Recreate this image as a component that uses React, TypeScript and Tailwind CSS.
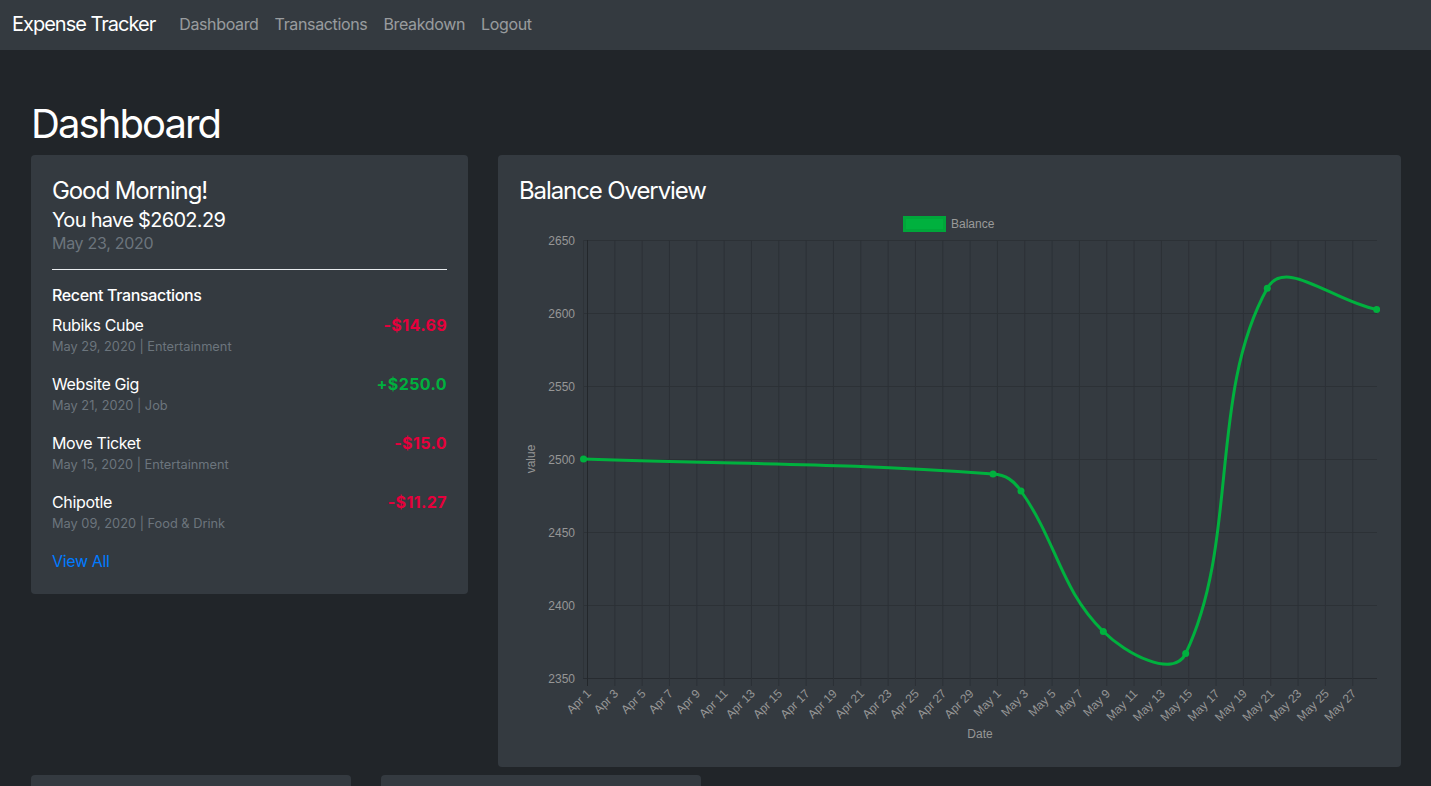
import React from 'react';

type Pt = [number, number];

// balance points, already in page pixels (chart svg uses an absolute viewBox)
const points: Pt[] = [
  [583.5, 459],
  [993, 474],
  [1021, 491],
  [1103.3, 631.5],
  [1185.7, 653.5],
  [1267.3, 288.3],
  [1376.7, 309.5],
];

const transactions = [
  { name: 'Rubiks Cube', meta: 'May 29, 2020 | Entertainment', amount: '-$14.69', income: false },
  { name: 'Website Gig', meta: 'May 21, 2020 | Job', amount: '+$250.0', income: true },
  { name: 'Move Ticket', meta: 'May 15, 2020 | Entertainment', amount: '-$15.0', income: false },
  { name: 'Chipotle', meta: 'May 09, 2020 | Food & Drink', amount: '-$11.27', income: false },
];

// same maths as chart.js splineCurve, tension 0.4
const buildPath = (pts: Pt[], t = 0.4) => {
  const ctrl = pts.map((cur, i) => {
    const prev = pts[i - 1] ?? cur;
    const next = pts[i + 1] ?? cur;
    const d01 = Math.hypot(cur[0] - prev[0], cur[1] - prev[1]);
    const d12 = Math.hypot(next[0] - cur[0], next[1] - cur[1]);
    const s01 = d01 + d12 ? d01 / (d01 + d12) : 0;
    const s12 = d01 + d12 ? d12 / (d01 + d12) : 0;
    const fa = t * s01;
    const fb = t * s12;
    return {
      before: [cur[0] - fa * (next[0] - prev[0]), cur[1] - fa * (next[1] - prev[1])],
      after: [cur[0] + fb * (next[0] - prev[0]), cur[1] + fb * (next[1] - prev[1])],
    };
  });
  let d = `M${pts[0][0]},${pts[0][1]}`;
  for (let i = 0; i < pts.length - 1; i++) {
    const a = ctrl[i].after;
    const b = ctrl[i + 1].before;
    const p = pts[i + 1];
    d += ` C${a[0].toFixed(1)},${a[1].toFixed(1)} ${b[0].toFixed(1)},${b[1].toFixed(1)} ${p[0]},${p[1]}`;
  }
  return d;
};

const xLabels: { label: string; x: number }[] = [];
for (let i = 0; i < 29; i++) {
  const day = i * 2 + 1;
  const label = day <= 30 ? `Apr ${day}` : `May ${day - 30}`;
  xLabels.push({ label, x: 587.5 + i * 27.33 });
}
const yTicks = [2650, 2600, 2550, 2500, 2450, 2400, 2350];

const BalanceChart = () => (
  <svg width={861} height={541} viewBox="519 205 861 541" className="block" style={{ fontFamily: '"Liberation Sans", Arial, sans-serif' }}>
    {/* legend */}
    <rect x={904.5} y={217.5} width={40} height={13} fill="#00b13e" stroke="#00a63a" strokeWidth={3} />
    <text x={951} y={228} fontSize={12} fill="#9a9a9a">Balance</text>

    {/* horizontal grid */}
    {yTicks.map((v, i) => {
      const y = 240 + i * 73 + 0.5;
      return (
        <g key={v}>
          <line x1={583} x2={1377} y1={y} y2={y} stroke={i === yTicks.length - 1 ? '#272b30' : '#2c3136'} strokeWidth={1} />
          <text x={575} y={y + 4} fontSize={12} fill="#969696" textAnchor="end">{v}</text>
        </g>
      );
    })}

    {/* vertical grid */}
    <line x1={583.5} x2={583.5} y1={240} y2={678} stroke="#2e3338" />
    {xLabels.map((l, i) => (
      <g key={l.label}>
        <line x1={l.x} x2={l.x} y1={240} y2={686} stroke={i === 0 ? '#23272b' : '#2c3136'} strokeWidth={1} />
        <text
          x={l.x + 2}
          y={692}
          fontSize={12}
          fill="#969696"
          textAnchor="end"
          dominantBaseline="middle"
          transform={`rotate(-45 ${l.x + 2} 692)`}
        >
          {l.label}
        </text>
      </g>
    ))}

    <text x={535} y={459} fontSize={12} fill="#969696" textAnchor="middle" transform="rotate(-90 535 459)">value</text>
    <text x={980} y={738} fontSize={12} fill="#969696" textAnchor="middle">Date</text>

    <path d={buildPath(points)} fill="none" stroke="#00b13e" strokeWidth={3} strokeLinejoin="round" />
    {points.map(([x, y]) => (
      <circle key={x} cx={x} cy={y} r={3.5} fill="#00b13e" />
    ))}
  </svg>
);

export default function App() {
  return (
    <div className="min-h-screen bg-[#212529] text-white" style={{ fontFamily: 'Inter, "Noto Sans", sans-serif' }}>
      {/* Navbar */}
      <nav className="h-[50px] bg-[#343a40] flex items-center pl-[12px] pb-[3px]">
        <span className="text-[20px] leading-[30px] tracking-[-1px] text-white mr-[16px]">Expense Tracker</span>
        <div className="flex items-center text-[16px] tracking-[-0.35px] text-white/50">
          <span className="px-[8px]">Dashboard</span>
          <span className="px-[8px]">Transactions</span>
          <span className="px-[8px]">Breakdown</span>
          <span className="px-[8px]">Logout</span>
        </div>
      </nav>

      <main className="pl-[31px] pr-[30px] pt-[50px]">
        <h1 className="text-[40px] leading-[48px] tracking-[-1.9px] font-normal mb-[7px]">Dashboard</h1>

        <div className="grid grid-cols-[437px_903px] gap-[30px] items-start">
          {/* Summary card */}
          <div className="bg-[#343a40] rounded-[4px] p-[21px]">
            <h4 className="text-[24px] leading-[29px] tracking-[-1.1px]">Good Morning!</h4>
            <h5 className="text-[20px] leading-[24px] tracking-[-0.7px] mt-[3px]">You have $2602.29</h5>
            <div className="text-[16px] leading-[20px] tracking-[-0.3px] mt-[1px] text-[#6c757d]">May 23, 2020</div>
            <hr className="my-[16px] border-0 border-t border-[#e9ecef]" />
            <h6 className="text-[16px] leading-[19px] tracking-[-0.35px] font-medium mb-[8px]">Recent Transactions</h6>
            {transactions.map((t) => (
              <div key={t.name} className="flex justify-between mb-[16px]">
                <div>
                  <div className="text-[16px] leading-[24px] tracking-[-0.35px]">{t.name}</div>
                  <div className="text-[12.8px] leading-[19px] text-[#6c757d]">{t.meta}</div>
                </div>
                <div className={`text-[16px] leading-[24px] tracking-[0.4px] font-bold ${t.income ? 'text-[#00b13e]' : 'text-[#e6003c]'}`}>
                  {t.amount}
                </div>
              </div>
            ))}
            <div className="text-[16px] leading-[24px] tracking-[-0.35px] text-[#007bff]">View All</div>
          </div>

          {/* Chart card */}
          <div className="bg-[#343a40] rounded-[4px] p-[21px]">
            <h4 className="text-[24px] leading-[29px] tracking-[-1.1px]">Balance Overview</h4>
            <BalanceChart />
          </div>
        </div>

        <div className="flex gap-[30px] mt-[8px]">
          <div className="w-[320px] h-[200px] bg-[#343a40] rounded-[4px]" />
          <div className="w-[320px] h-[200px] bg-[#343a40] rounded-[4px]" />
        </div>
      </main>
    </div>
  );
}
